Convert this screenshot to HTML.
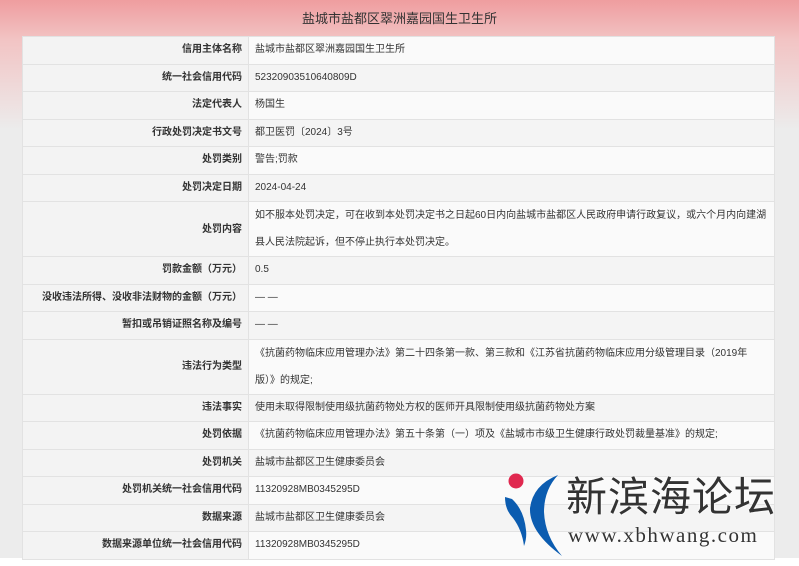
<!DOCTYPE html>
<html><head><meta charset="utf-8"><style>
body{margin:0;width:799px;height:566px;overflow:hidden;background:#fff;font-family:"Liberation Sans","Noto Sans CJK SC",sans-serif;position:relative}
.bg{position:absolute;left:0;top:0;width:799px;height:558px;background:linear-gradient(to bottom,#ef9d9f 0px,#f2c4c4 40px,#ececec 130px,#ececec 100%)}
.title{position:absolute;top:8px;left:0;width:799px;text-align:center;font-size:13px;color:#333}
table{position:absolute;left:22px;top:36px;width:753px;border-collapse:collapse;font-size:10px;color:#333}
tr{height:27.5px}
tr.d{height:55px}
td{border:1px solid #e2e2e2;padding:0 6px;line-height:24px;box-sizing:border-box}
tr.d td{line-height:27px}
td.l{width:226px;text-align:right;font-weight:bold;background:#f3f3f3}
tr:nth-child(odd) td.v{background:#fafafa}
tr:nth-child(even) td.v{background:#f4f4f4}
.logo{position:absolute;left:500px;top:466px}
.t1{position:absolute;left:566px;top:463px;font-size:41px;color:#333;letter-spacing:1px;text-shadow:0 0 2px #fff,0 0 2px #fff;white-space:nowrap}
.t2{position:absolute;left:568px;top:523px;font-family:"Liberation Serif",serif;font-size:21px;color:#333;letter-spacing:1.5px;text-shadow:0 0 2px #fff;white-space:nowrap}
</style></head><body>
<div class="bg"></div>
<div class="title">盐城市盐都区翠洲嘉园国生卫生所</div>
<table>
<tr><td class="l">信用主体名称</td><td class="v">盐城市盐都区翠洲嘉园国生卫生所</td></tr>
<tr><td class="l">统一社会信用代码</td><td class="v">52320903510640809D</td></tr>
<tr><td class="l">法定代表人</td><td class="v">杨国生</td></tr>
<tr><td class="l">行政处罚决定书文号</td><td class="v">都卫医罚〔2024〕3号</td></tr>
<tr><td class="l">处罚类别</td><td class="v">警告;罚款</td></tr>
<tr><td class="l">处罚决定日期</td><td class="v">2024-04-24</td></tr>
<tr class="d"><td class="l">处罚内容</td><td class="v">如不服本处罚决定，可在收到本处罚决定书之日起60日内向盐城市盐都区人民政府申请行政复议，或六个月内向建湖<br>县人民法院起诉，但不停止执行本处罚决定。</td></tr>
<tr><td class="l">罚款金额（万元）</td><td class="v">0.5</td></tr>
<tr><td class="l">没收违法所得、没收非法财物的金额（万元）</td><td class="v">— —</td></tr>
<tr><td class="l">暂扣或吊销证照名称及编号</td><td class="v">— —</td></tr>
<tr class="d"><td class="l">违法行为类型</td><td class="v">《抗菌药物临床应用管理办法》第二十四条第一款、第三款和《江苏省抗菌药物临床应用分级管理目录（2019年<br>版）》的规定;</td></tr>
<tr><td class="l">违法事实</td><td class="v">使用未取得限制使用级抗菌药物处方权的医师开具限制使用级抗菌药物处方案</td></tr>
<tr><td class="l">处罚依据</td><td class="v">《抗菌药物临床应用管理办法》第五十条第（一）项及《盐城市市级卫生健康行政处罚裁量基准》的规定;</td></tr>
<tr><td class="l">处罚机关</td><td class="v">盐城市盐都区卫生健康委员会</td></tr>
<tr><td class="l">处罚机关统一社会信用代码</td><td class="v">11320928MB0345295D</td></tr>
<tr><td class="l">数据来源</td><td class="v">盐城市盐都区卫生健康委员会</td></tr>
<tr><td class="l">数据来源单位统一社会信用代码</td><td class="v">11320928MB0345295D</td></tr>
</table>
<svg class="logo" width="70" height="95" viewBox="500 466 70 95">
<circle cx="516" cy="481" r="7.5" fill="#e0284f"/>
<path d="M505 497 L512 499 Q524 510 526 530 Q527 538 524 546 Q522 530 513 518 Q505 510 505 497Z" fill="#0b5cb0"/>
<path d="M558 475 Q533 485 530 508 Q529 532 562 556 Q545 536 544 512 Q544 490 558 475Z" fill="#0b5cb0"/>
</svg>
<div class="t1">新滨海论坛</div>
<div class="t2">www.xbhwang.com</div>
</body></html>
